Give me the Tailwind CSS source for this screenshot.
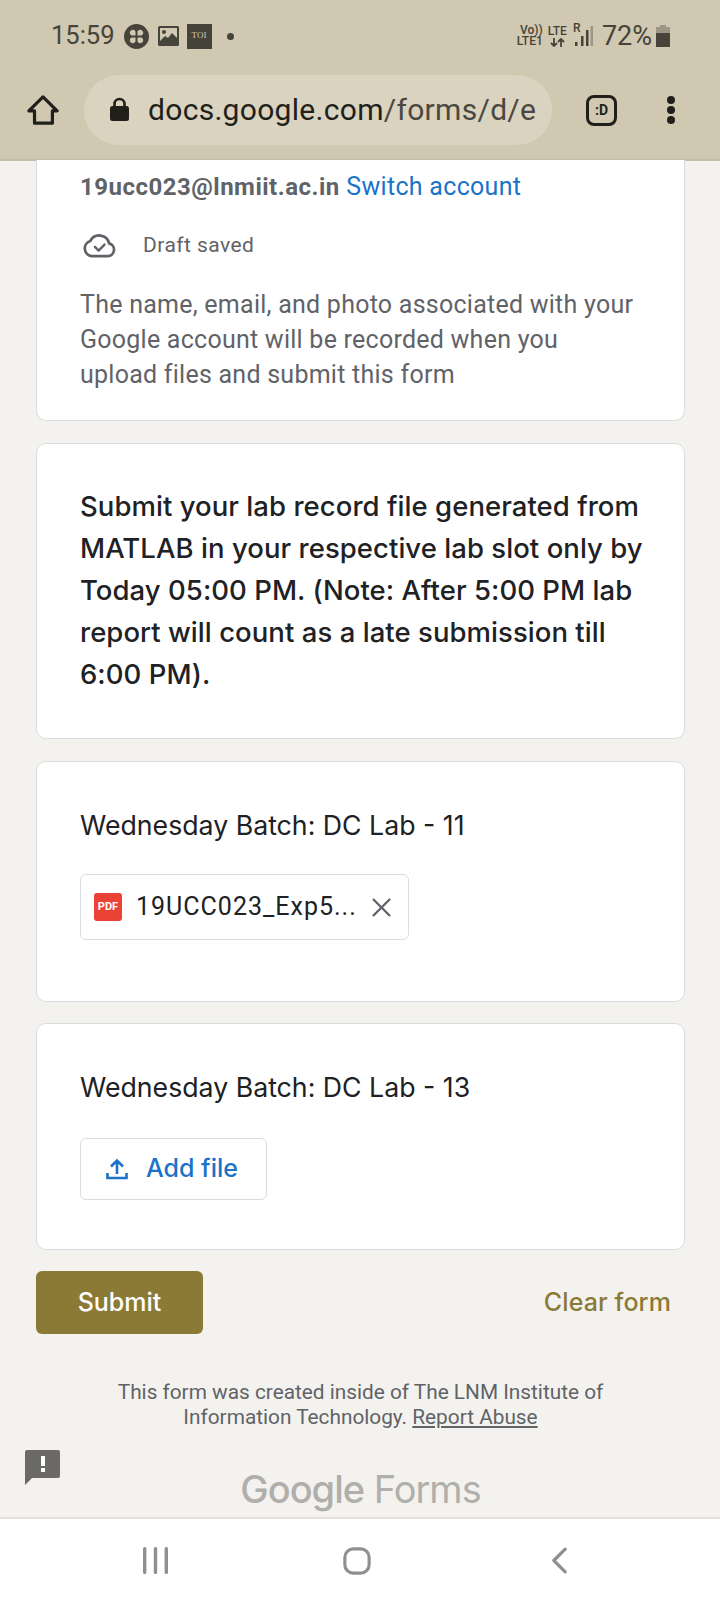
<!DOCTYPE html>
<html lang="en">
<head>
<meta charset="UTF-8">
<title>Google Forms</title>
<script src="https://cdn.jsdelivr.net/npm/@tailwindcss/browser@4"></script>
</head>
<body class="bg-[#f4f2ee] font-['Roboto',sans-serif]">
<div class="w-[720px] h-[1600px] flex flex-col relative overflow-hidden">

  <!-- status bar + browser toolbar -->
  <header class="h-[161px] shrink-0 bg-[#d0c8b0] border-b-2 border-[#c4bda8] flex flex-col">
    <div class="h-[72px] flex items-center justify-between pl-[51px] pr-[50px] text-[#46433a]">
      <div class="flex items-center">
        <span class="text-[25.5px] leading-none">15:59</span>
        <svg class="ml-[9px]" width="25" height="25" viewBox="0 0 25 25"><circle cx="12.5" cy="12.5" r="12.5" fill="#46433a"/><g fill="#d0c8b0"><path d="M11.5 11.5 H7.5 a3 3 0 1 1 4-4 Z"/><path d="M13.5 11.5 H17.5 a3 3 0 1 0-4-4 Z"/><path d="M11.5 13.5 H7.5 a3 3 0 1 0 4 4 Z"/><path d="M13.5 13.5 H17.5 a3 3 0 1 1-4 4 Z"/></g></svg>
        <svg class="ml-[9px]" width="21" height="20" viewBox="0 0 21 20"><rect width="21" height="20" rx="1.5" fill="#46433a"/><rect x="2" y="2" width="17" height="13" fill="#d0c8b0"/><circle cx="6" cy="6" r="2" fill="#46433a"/><path d="M2 15 L7 10 L10 12 L14 7 L19 12 V15 Z" fill="#46433a"/></svg>
        <span class="ml-[8px] w-[25px] h-[25px] bg-[#46433a] text-[#d0c8b0] text-[9px] font-['Liberation_Serif',serif] flex items-center justify-center">TOI</span>
        <span class="ml-[15px] w-[7px] h-[7px] rounded-full bg-[#46433a]"></span>
      </div>
      <div class="flex items-center">
        <div class="flex flex-col items-end text-[12px] leading-[11px] font-medium mr-[5px]"><span>Vo))</span><span>LTE1</span></div>
        <div class="flex flex-col items-center text-[12px] leading-[11px] font-medium mr-[6px]">
          <span>LTE</span>
          <svg class="mt-[1px]" width="15" height="9" viewBox="0 0 15 9" fill="none" stroke="#46433a" stroke-width="1.8"><path d="M4 0 V8 M1 5 L4 8 L7 5 M11 9 V1 M8 4 L11 1 L14 4"/></svg>
        </div>
        <div class="relative w-[20px] h-[24px] mr-[9px]">
          <span class="absolute left-0 -top-[1px] text-[12px] leading-[11px] font-medium">R</span>
          <svg class="absolute left-0 top-0" width="20" height="24" viewBox="0 0 20 24"><rect x="2" y="18" width="2.5" height="4" fill="#46433a"/><rect x="8" y="12" width="2.5" height="10" fill="#46433a"/><rect x="13" y="6" width="2.5" height="16" fill="#46433a"/><rect x="17.5" y="2" width="2.5" height="20" fill="#9c9684"/></svg>
        </div>
        <span class="text-[27px] leading-none mr-[4px]">72%</span>
        <svg width="14" height="22" viewBox="0 0 14 22"><path d="M4 0h6v2h4v20H0V2h4z" fill="#9c9684"/><rect y="8" width="14" height="14" fill="#46433a"/></svg>
      </div>
    </div>
    <div class="flex items-center h-[72px] mt-[2px]">
      <svg class="ml-[27px]" width="32" height="32" viewBox="0 0 34 34" fill="none" stroke="#211f1a" stroke-width="3.4" stroke-linejoin="round"><path d="M2 18 L17 3 L32 18 H27 V31 H8 V18 Z"/></svg>
      <div class="ml-[25px] w-[468px] h-[70px] rounded-full bg-[#dad3bf] flex items-center pl-[26px]">
        <svg width="19" height="26" viewBox="0 0 19 26"><path d="M4.5 10 V7 a5 5 0 0 1 10 0 V10" fill="none" stroke="#211f1a" stroke-width="2.6"/><rect y="9" width="19" height="15" rx="2.5" fill="#211f1a"/></svg>
        <span class="ml-[19px] text-[30px] leading-none tracking-[0.3px] text-[#211f1a]">docs.google.com<span class="text-[#4a4841]">/forms/d/e</span></span>
      </div>
      <div class="ml-[34px] w-[31px] h-[31px] border-[3px] border-[#211f1a] rounded-[8px] flex items-center justify-center text-[14px] font-bold text-[#211f1a]">:D</div>
      <div class="ml-[50px] flex flex-col gap-[2px]">
        <span class="w-[8px] h-[8px] rounded-full bg-[#211f1a]"></span>
        <span class="w-[8px] h-[8px] rounded-full bg-[#211f1a]"></span>
        <span class="w-[8px] h-[8px] rounded-full bg-[#211f1a]"></span>
      </div>
    </div>
  </header>

  <!-- form -->
  <main class="flex-1 pl-[36px] pr-[35px]">
    <section class="h-[261px] -mt-[1px] bg-white border border-t-0 border-[#dadce0] rounded-b-[10px] px-[43px] pt-[11px]">
      <p class="text-[25px] leading-[32px] tracking-[0.3px]"><span class="font-bold text-[#5f6368] text-[24px] tracking-[0.5px]">19ucc023@lnmiit.ac.in</span> <span class="text-[#1a73c8]">Switch account</span></p>
      <div class="flex items-center mt-[25px] h-[36px]">
        <svg class="ml-[3px]" width="33" height="26" viewBox="0 0 36 28" fill="none" stroke="#5f6368" stroke-width="3" stroke-linejoin="round" stroke-linecap="round"><path d="M9 25 H27 a7 7 0 0 0 1.5-13.8 A11 11 0 0 0 8 8.5 A8.5 8.5 0 0 0 9 25 Z"/><path d="M13 15 L17 19 L23.5 12.5" stroke-width="2.6"/></svg>
        <span class="ml-[27px] text-[21px] tracking-[0.45px] text-[#5f6368]">Draft saved</span>
      </div>
      <p class="mt-[23px] text-[25px] leading-[35px] tracking-[0.25px] text-[#5f6368]">The name, email, and photo associated with your Google account will be recorded when you upload files and submit this form</p>
    </section>

    <section class="h-[296px] mt-[22px] bg-white border border-[#dadce0] rounded-[10px] pl-[43px] pr-[30px] pt-[41px]">
      <p class="font-['Inter',sans-serif] font-medium text-[27.5px] leading-[42px] tracking-[0.05px] text-[#202124]">Submit your lab record file generated from MATLAB in your respective lab slot only by Today 05:00 PM. (Note: After 5:00 PM lab report will count as a late submission till 6:00 PM).</p>
    </section>

    <section class="h-[241px] mt-[22px] bg-white border border-[#dadce0] rounded-[10px] px-[43px] pt-[45px]">
      <p class="font-['Inter',sans-serif] text-[26.7px] leading-[36px] text-[#202124]">Wednesday Batch: DC Lab - 11</p>
      <div class="mt-[31px] w-[329px] h-[66px] border border-[#dadce0] rounded-[6px] flex items-center pl-[13px]">
        <span class="w-[28px] h-[28px] rounded-[3px] bg-[#ea4335] text-white text-[11px] font-bold flex items-center justify-center">PDF</span>
        <span class="ml-[14px] w-[226px] text-[25px] tracking-[1px] text-[#202124]">19UCC023_Exp5...</span>
        <svg class="ml-[10px]" width="19" height="19" viewBox="0 0 20 20" stroke="#5f6368" stroke-width="2.4"><path d="M1 1 L19 19 M19 1 L1 19"/></svg>
      </div>
    </section>

    <section class="h-[227px] mt-[21px] bg-white border border-[#dadce0] rounded-[10px] px-[43px] pt-[45px]">
      <p class="font-['Inter',sans-serif] text-[26.7px] leading-[36px] text-[#202124]">Wednesday Batch: DC Lab - 13</p>
      <div class="mt-[33px] w-[187px] h-[62px] border border-[#dadce0] rounded-[6px] flex items-center pl-[25px]">
        <svg width="22" height="22" viewBox="0 0 22 22" fill="none" stroke="#1a73c8" stroke-width="2.6"><path d="M11 16 V3 M5 8.5 L11 2.5 L17 8.5"/><path d="M1.5 15 V20 H20.5 V15"/></svg>
        <span class="ml-[18px] font-['Inter',sans-serif] font-medium text-[25px] text-[#1a73c8]">Add file</span>
      </div>
    </section>

    <div class="mt-[21px] flex items-center justify-between pr-[14px]">
      <div class="w-[167px] h-[63px] rounded-[6px] bg-[#8a7a36] text-white font-['Inter',sans-serif] font-medium text-[25px] flex items-center justify-center">Submit</div>
      <span class="font-['Inter',sans-serif] font-medium text-[25px] tracking-[0.1px] text-[#8a7a36]">Clear form</span>
    </div>

    <p class="mt-[46px] px-[60px] text-center text-[20.8px] leading-[25px] text-[#5f6368]">This form was created inside of The LNM Institute of Information Technology. <span class="underline">Report Abuse</span></p>

    <p class="mt-[36px] text-center font-['Inter',sans-serif] text-[38px] leading-[46px] tracking-[-1px] text-[#b0afab]"><span class="font-medium">Google</span> Forms</p>
  </main>

  <!-- report icon sits over the footer -->
  <svg class="absolute left-[25px] top-[1450px]" width="35" height="35" viewBox="0 0 35 35"><path d="M2 0 H33 a2 2 0 0 1 2 2 V26 a2 2 0 0 1-2 2 H7 L0 35 V2 a2 2 0 0 1 2-2 Z" fill="#6b6a66"/><rect x="16" y="6" width="4" height="10" fill="#fff"/><rect x="16" y="18" width="4" height="4" fill="#fff"/></svg>

  <!-- android nav -->
  <nav class="h-[83px] shrink-0 bg-white border-t-2 border-[#e2e1dd] flex items-center pl-[143px] pt-[2px]">
    <svg width="25" height="27" viewBox="0 0 25 27" fill="#909090"><rect x="0" width="3.4" height="27" rx="1.5"/><rect x="10.8" width="3.4" height="27" rx="1.5"/><rect x="21.6" width="3.4" height="27" rx="1.5"/></svg>
    <svg class="ml-[175px]" width="28" height="28" viewBox="0 0 30 30" fill="none" stroke="#909090" stroke-width="3.4"><rect x="2" y="2" width="26" height="26" rx="9"/></svg>
    <svg class="ml-[180px]" width="17" height="27" viewBox="0 0 18 28" fill="none" stroke="#909090" stroke-width="3.4" stroke-linecap="round" stroke-linejoin="round"><path d="M15 2 L3 14 L15 26"/></svg>
  </nav>
</div>
</body>
</html>
